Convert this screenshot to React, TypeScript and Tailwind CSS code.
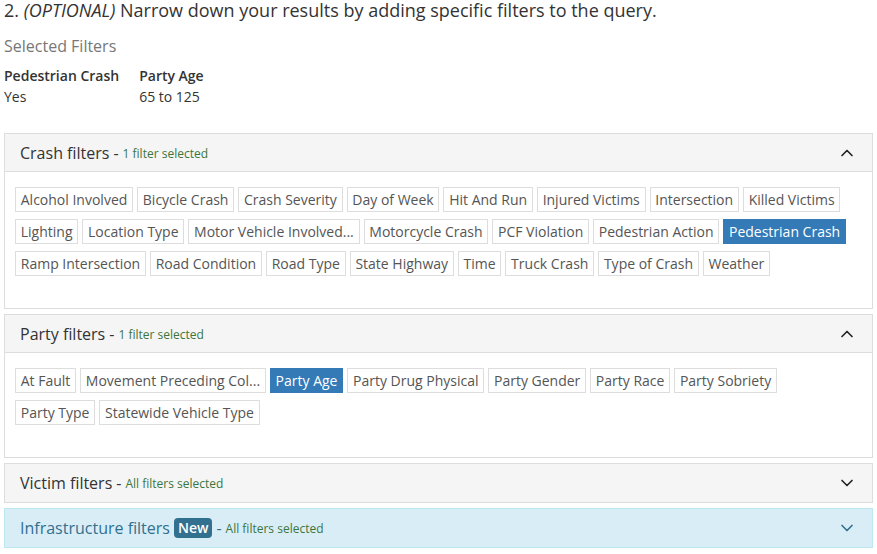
import { ChevronDown, ChevronUp } from 'lucide-react'

const crashFilters = [
  'Alcohol Involved', 'Bicycle Crash', 'Crash Severity', 'Day of Week', 'Hit And Run',
  'Injured Victims', 'Intersection', 'Killed Victims', 'Lighting', 'Location Type',
  'Motor Vehicle Involved...', 'Motorcycle Crash', 'PCF Violation', 'Pedestrian Action',
  'Pedestrian Crash', 'Ramp Intersection', 'Road Condition', 'Road Type', 'State Highway',
  'Time', 'Truck Crash', 'Type of Crash', 'Weather',
]

const partyFilters = [
  'At Fault', 'Movement Preceding Col...', 'Party Age', 'Party Drug Physical', 'Party Gender',
  'Party Race', 'Party Sobriety', 'Party Type', 'Statewide Vehicle Type',
]

function FilterButton({ label, active }: { label: string; active: boolean }) {
  return (
    <button
      className={`h-[25px] px-[4.75px] border text-[14px] leading-[23px] whitespace-nowrap ${
        active ? 'bg-[#337ab7] border-[#337ab7] text-white' : 'bg-white border-[#dddddd] text-[#555555]'
      }`}
    >
      {label}
    </button>
  )
}

function Panel({
  title,
  status,
  open,
  items = [],
  selected = '',
  info = false,
}: {
  title: string
  status: string
  open: boolean
  items?: string[]
  selected?: string
  info?: boolean
}) {
  return (
    <div className={`border ${info ? 'border-[#bce8f1]' : 'border-[#dddddd]'} bg-white`}>
      <div
        className={`h-[38px] flex items-center justify-between pl-[15px] pr-[15px] ${
          info ? 'bg-[#d9edf7] text-[#31708f]' : 'bg-[#f5f5f5] text-[#333333]'
        } ${open ? 'border-b border-[#dddddd]' : ''}`}
      >
        <div className="flex items-center">
          <span className="text-[16px]">{title}</span>
          {info && (
            <span className="ml-[4px] bg-[#31708f] text-white text-[14px] font-semibold leading-[20px] px-[4px] rounded-[4px]">
              New
            </span>
          )}
          <span className="text-[16px] ml-[4px]">-</span>
          <span className="text-[12px] text-[#3c763d] ml-[4px] mt-[2px]">{status}</span>
        </div>
        {open ? (
          <ChevronUp className="w-[20px] h-[20px] text-[#222]" strokeWidth={2} />
        ) : (
          <ChevronDown className={`w-[20px] h-[20px] ${info ? 'text-[#31708f]' : 'text-[#222]'}`} strokeWidth={2} />
        )}
      </div>
      {open && (
        <div className="pl-[10px] pr-[22px] pt-[15px] pb-[32px] flex flex-wrap gap-x-[4px] gap-y-[7px]">
          {items.map((item) => (
            <FilterButton key={item} label={item} active={item === selected} />
          ))}
        </div>
      )}
    </div>
  )
}

export default function App() {
  return (
    <div className="w-[877px] h-[554px] overflow-hidden bg-white font-['Open_Sans',sans-serif] text-[#333333]">
      <div className="px-[4px] -mt-[3px]">
        <div className="text-[18px] leading-[26px]">
          2. <em>(OPTIONAL)</em> Narrow down your results by adding specific filters to the query.
        </div>
        <div className="mt-[12px] text-[16px] text-[#777777] leading-[22px]">Selected Filters</div>
        <div className="mt-[8px] flex gap-[20px] text-[14px] leading-[21px]">
          <div>
            <div className="font-semibold">Pedestrian Crash</div>
            <div>Yes</div>
          </div>
          <div>
            <div className="font-semibold">Party Age</div>
            <div>65 to 125</div>
          </div>
        </div>
      </div>
      <div className="mt-[26px] ml-[4px] w-[869px] flex flex-col gap-[5px]">
        <Panel title="Crash filters" status="1 filter selected" open items={crashFilters} selected="Pedestrian Crash" />
        <Panel title="Party filters" status="1 filter selected" open items={partyFilters} selected="Party Age" />
        <Panel title="Victim filters" status="All filters selected" open={false} />
        <Panel title="Infrastructure filters" status="All filters selected" open={false} info />
      </div>
    </div>
  )
}
